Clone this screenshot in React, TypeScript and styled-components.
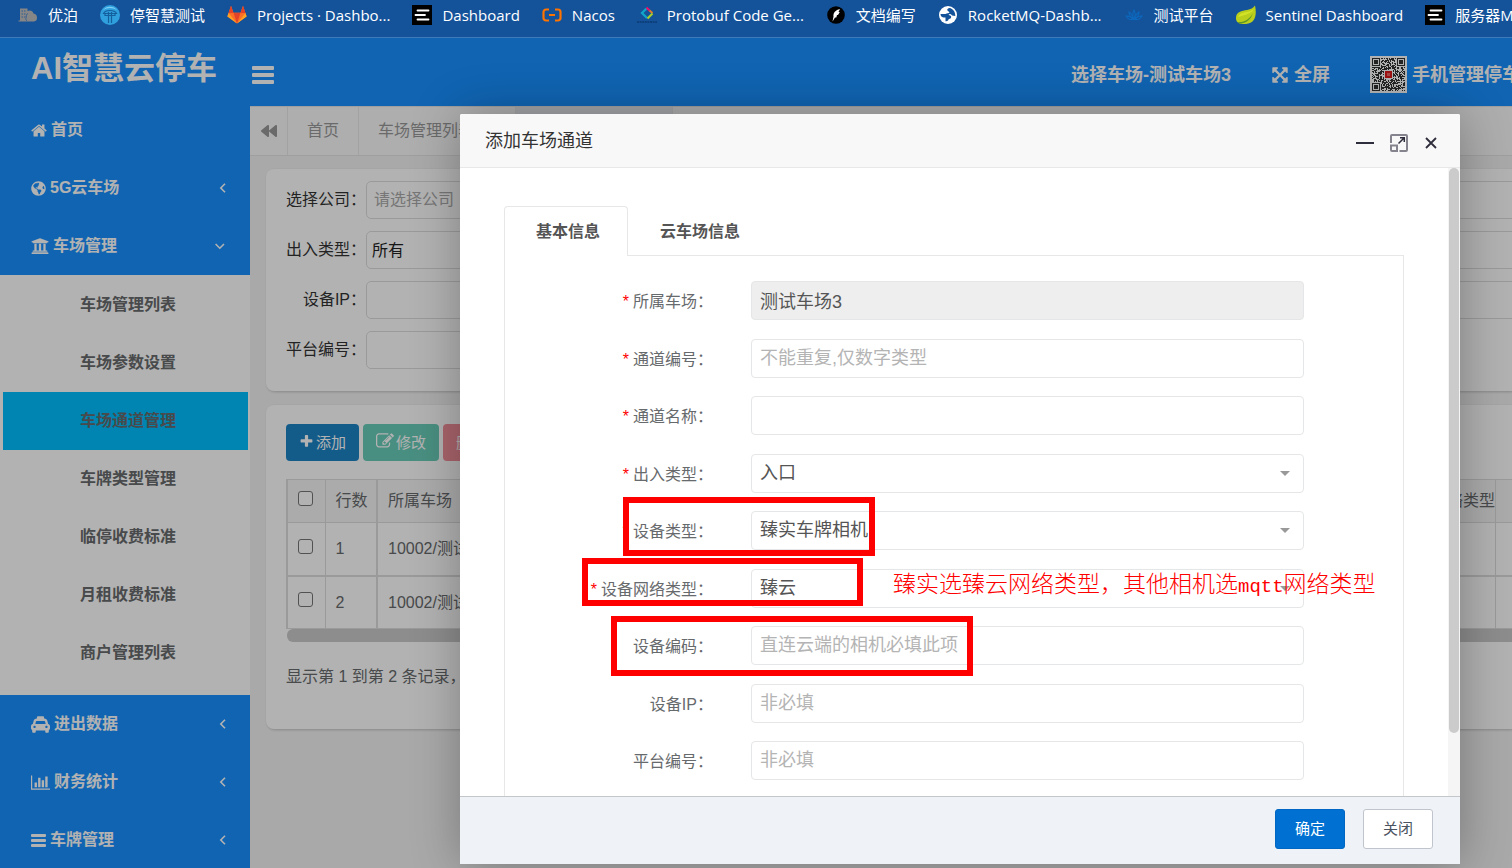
import React from "react";
import styled, { createGlobalStyle, css } from "styled-components";
import { FaUniversity, FaTaxi, FaBackward, FaGlobeAmericas } from "react-icons/fa";

const sans = `"Liberation Sans", "Noto Sans CJK SC", sans-serif`;

const GlobalStyle = createGlobalStyle`
  *, *::before, *::after { box-sizing: border-box; }
  body { margin: 0; font-family: ${sans}; font-size: 16px; color: #676a6c; }
  button, input, select { font-family: inherit; }
  a { color: inherit; text-decoration: none; }
  ul { list-style: none; margin: 0; padding: 0; }
`;

/* ---------- browser bookmarks ---------- */

const Screen = styled.div`
  display: flex;
  flex-direction: column;
  height: 100vh;
  overflow: hidden;
`;

const Bookmarks = styled.nav`
  flex: none;
  display: flex;
  align-items: center;
  gap: 22px;
  height: 38px;
  padding: 0 0 8px 18px;
  overflow: hidden;
  background: #14529a;
  border-bottom: 1px solid #3f7bbb;
`;

const Bookmark = styled.a`
  flex: none;
  display: flex;
  align-items: center;
  gap: 10px;
  color: #fff;
  font: 15px/24px "Open Sans", "Noto Sans CJK SC", sans-serif;
  white-space: nowrap;
  svg { flex: none; }
`;

/* ---------- page frame ---------- */

const Page = styled.div`
  position: relative;
  flex: 1;
  min-height: 0;
  display: flex;
  overflow: hidden;
`;

const Sidebar = styled.aside`
  flex: none;
  width: 250px;
  background: #1890ff;
  color: #fff;
`;

const Brand = styled.h1`
  height: 63px;
  margin: 0;
  padding-left: 31px;
  font-size: 31px;
  line-height: 62px;
  font-weight: 700;
`;

const MenuLink = styled.a`
  display: flex;
  align-items: center;
  gap: 4px;
  height: 58px;
  padding: 0 22px 0 31px;
  font-weight: 700;
  line-height: 24px;
  > svg:last-child:not(:first-child) { margin-left: auto; }
`;

const SubMenu = styled.ul`
  padding: 1px 2px 13px 3px;
  background: #fff;
  color: #676a6c;
`;

const SubLink = styled.a<{ $active?: boolean }>`
  display: block;
  height: 58px;
  padding-left: 77px;
  font-weight: 700;
  line-height: 58px;
  background: ${(p) => (p.$active ? "#00bfff" : "transparent")};
`;

const Main = styled.main`
  flex: 1;
  min-width: 0;
  background: #f3f3f4;
`;

const TopBar = styled.header`
  display: flex;
  align-items: center;
  height: 68px;
  padding: 5px 0 0 2px;
  background: #1890ff;
  color: #fff;
  overflow: hidden;
`;

const IconButton = styled.button`
  display: grid;
  place-items: center;
  padding: 0;
  border: 0;
  background: none;
  color: inherit;
`;

const TopLinks = styled.nav`
  flex: none;
  display: flex;
  align-items: center;
  gap: 40px;
  margin: 0 -8px 0 auto;
`;

const TopLink = styled.a`
  display: flex;
  align-items: center;
  gap: 5px;
  font-size: 18px;
  line-height: 26px;
  font-weight: 700;
  white-space: nowrap;
`;

const PageTabs = styled.nav`
  display: flex;
  height: 50px;
  border-top: 1px solid #e4e4e4;
  border-bottom: 1px solid #e4e4e4;
  background: #fafafa;
  color: #999;
  overflow: hidden;
`;

const PageTab = styled.a<{ $active?: boolean }>`
  flex: none;
  display: flex;
  align-items: center;
  min-width: ${(p) => (p.$active !== undefined ? "157px" : "0")};
  padding: 0 19px;
  border-right: 1px solid #e8e8e8;
  line-height: 24px;
  background: ${(p) => (p.$active ? "#eaedf1" : "transparent")};
`;

const TabScroller = styled(IconButton)`
  flex: none;
  width: 38px;
  border-right: 1px solid #e8e8e8;
`;

const Cards = styled.div`
  display: flex;
  flex-direction: column;
  gap: 14px;
  padding: 13px 0 0 16px;
`;

const Card = styled.section<{ $pad: string }>`
  padding: ${(p) => p.$pad};
  border-radius: 8px 0 0 8px;
  background: #fff;
  box-shadow: 1px 1px 3px rgba(0, 0, 0, 0.2);
  overflow: hidden;
`;

const FilterForm = styled.form`
  display: grid;
  row-gap: 12px;
`;

const FilterRow = styled.div`
  display: grid;
  grid-template-columns: 80px 1fr;
  align-items: center;
  label {
    color: #333;
    line-height: 36px;
    text-align: right;
    white-space: nowrap;
  }
`;

const filterControl = css<{ $short?: boolean }>`
  appearance: none;
  width: ${(p) => (p.$short ? "250px" : "calc(100% + 8px)")};
  height: 38px;
  border: 1px solid #ddd;
  border-radius: 5px;
  background: #fff;
  color: #222;
  font-size: 16px;
`;

const FilterInput = styled.input<{ $short?: boolean }>`
  ${filterControl}
  padding: 0 7px;
  &::placeholder { color: #aaa; opacity: 1; }
`;

const FilterSelect = styled.select<{ $short?: boolean }>`
  ${filterControl}
  padding: 0 5px;
`;

const Actions = styled.div`
  display: flex;
  gap: 4px;
  margin-bottom: 18px;
`;

const ActionButton = styled.button<{ $color: string }>`
  display: flex;
  align-items: center;
  gap: 2px;
  height: 37px;
  padding: 0 13px 3px;
  border: 0;
  border-radius: 4px;
  background: ${(p) => p.$color};
  color: #fff;
  font-size: 15px;
  &:disabled { opacity: 0.65; }
`;

const DataTable = styled.table`
  width: calc(100% + 4px);
  table-layout: fixed;
  border-collapse: collapse;
  border-left: 2px solid #ddd;
  line-height: 24px;
  th, td {
    padding: 0 10px;
    border: 1px solid #ddd;
    font-weight: 400;
    text-align: left;
    white-space: nowrap;
    overflow: hidden;
  }
  th { height: 43px; background: #f5f5f6; }
  td { height: 53px; padding-top: 1px; }
  tbody tr + tr td { border-top-width: 2px; }
  th:first-child, td:first-child { border-left-width: 2px; }
  th:nth-child(3), td:nth-child(3) { border-left-width: 2px; }
  th:nth-child(4) { padding-right: 0; text-align: right; }
`;

const Tick = styled.input`
  appearance: none;
  display: block;
  width: 15px;
  height: 15px;
  margin: 0 0 6px;
  border: 1px solid #767676;
  border-radius: 3px;
  background: #fff;
`;

const TableScroll = styled.div`
  height: 13px;
  margin-left: 1px;
  border-radius: 6px 0 0 6px;
  background: #cacaca;
`;

const Summary = styled.p`
  margin: 23px 0 0;
  line-height: 24px;
  white-space: nowrap;
`;

/* ---------- dialog ---------- */

const Shade = styled.div`
  position: absolute;
  inset: 0;
  background: rgba(0, 0, 0, 0.3);
`;

const Dialog = styled.section`
  position: absolute;
  top: 76px;
  right: 52px;
  bottom: 4px;
  left: 460px;
  display: flex;
  flex-direction: column;
  border-radius: 2px;
  background: #fff;
  box-shadow: 1px 1px 50px rgba(0, 0, 0, 0.3);
`;

const DialogHead = styled.header`
  flex: none;
  display: flex;
  align-items: center;
  height: 54px;
  padding: 0 22px 0 25px;
  border-bottom: 1px solid #e8e8e8;
  border-radius: 2px 2px 0 0;
  background: #f8f8f8;
  color: #2e2d3c;
`;

const DialogTitle = styled.h2`
  margin: 0 auto 0 0;
  color: #333;
  font-size: 18px;
  line-height: 52px;
  font-weight: 400;
`;

const WindowButtons = styled.div`
  display: flex;
  align-items: center;
  gap: 16px;
  padding-top: 4px;
`;

const DialogBody = styled.div`
  flex: 1;
  min-height: 0;
  display: flex;
`;

const ScrollArea = styled.div`
  flex: 1;
  padding: 38px 44px 0;
  overflow-y: auto;
  scrollbar-width: none;
`;

const ScrollTrack = styled.div`
  flex: none;
  width: 12px;
  padding: 0 1px;
  background: #f5f5f5;
`;

const ScrollThumb = styled.div`
  height: 90%;
  border-radius: 5px;
  background: #cbcbcb;
`;

const FormTabs = styled.div`
  display: flex;
  height: 49px;
`;

const FormTab = styled.button<{ $active?: boolean }>`
  height: 50px;
  padding: 0 27px 4px 31px;
  border: 1px solid ${(p) => (p.$active ? "#e7e7e7" : "transparent")};
  border-bottom: 0;
  border-radius: 4px 4px 0 0;
  background: ${(p) => (p.$active ? "#fff" : "transparent")};
  color: #555;
  font-size: 16px;
  font-weight: 700;
  z-index: 1;
`;

const FormPanel = styled.form`
  padding: 25px 99px 84px 0;
  border: 1px solid #e7e7e7;
`;

const FieldRow = styled.div`
  display: grid;
  grid-template-columns: 208px 1fr;
  column-gap: 38px;
  align-items: center;
  margin-bottom: 19px;
  &:nth-child(even) { margin-bottom: 18px; }
`;

const FieldLabel = styled.label<{ $required?: boolean }>`
  padding-top: 2px;
  line-height: 37px;
  text-align: right;
  white-space: nowrap;
  ${(p) =>
    p.$required &&
    css`
      &::before { content: "*"; margin-right: 4px; color: #f00; }
    `}
`;

const control = css`
  appearance: none;
  width: 100%;
  height: 39px;
  padding: 0 8px 1px;
  border: 1px solid #e5e6e7;
  border-radius: 4px;
  background: #fff;
  color: #555;
  font-size: 18px;
`;

const TextField = styled.input`
  ${control}
  &::placeholder { color: #b4b4b4; opacity: 1; }
  &[readonly] { background: #eee; }
`;

const SelectField = styled.select`
  ${control}
`;

const SelectBox = styled.div`
  position: relative;
  &::after {
    content: "";
    position: absolute;
    top: 17px;
    right: 14px;
    border: 5px solid transparent;
    border-top-color: #999;
    border-bottom: 0;
  }
`;

const DialogFoot = styled.footer`
  flex: none;
  display: flex;
  justify-content: flex-end;
  gap: 18px;
  height: 68px;
  padding: 12px 27px 0 0;
  border-top: 1px solid #c4c7ca;
  background: #eff3f7;
`;

const FootButton = styled.button<{ $primary?: boolean }>`
  width: 70px;
  height: 40px;
  padding: 0 0 3px;
  border: 1px solid ${(p) => (p.$primary ? "#0067c2" : "#c0c4cc")};
  border-radius: 3px;
  background: ${(p) => (p.$primary ? "#0070d2" : "#fff")};
  color: ${(p) => (p.$primary ? "#fff" : "#4b5360")};
  font-size: 15px;
`;

/* Red guidance marks that lie over the dialog */

const Mark = styled.div<{ $x: number; $y: number; $w: number; $h: number }>`
  position: absolute;
  left: ${(p) => p.$x}px;
  top: ${(p) => p.$y}px;
  width: ${(p) => p.$w}px;
  height: ${(p) => p.$h}px;
  border: 6px solid #f00;
  pointer-events: none;
`;

const Note = styled.p`
  position: absolute;
  left: 433px;
  top: 455px;
  margin: 0;
  color: #f00;
  font: 23px/32px "Liberation Serif", "Noto Sans CJK SC", serif;
  font-weight: 300;
  white-space: nowrap;
  pointer-events: none;
  code { font: 19px/32px "Liberation Mono", monospace; }
`;

/* ---------- icons ---------- */

const Glyph = ({ d, w = 1792, size = 17 }: { d: string; w?: number; size?: number }) => (
  <svg height={size} width={Math.round((size * w) / 1792)} viewBox={`0 0 ${w} 1792`} fill="currentColor" aria-hidden="true">
    <path d={d} />
  </svg>
);

const homePath =
  "M1408 992v480q0 26-19 45t-45 19h-384v-384h-256v384h-384q-26 0-45-19t-19-45v-480q0-1 .5-3t.5-3l575-474 575 474q1 2 1 6zm223-69l-62 74q-8 9-21 11h-3q-13 0-21-7l-692-577-692 577q-12 8-24 7-13-2-21-11l-62-74q-8-10-7-23.5t11-21.5l719-599q32-26 76-26t76 26l244 204v-195q0-14 9-23t23-9h192q14 0 23 9t9 23v408l219 182q10 8 11 21.5t-7 23.5z";
const chartPath =
  "M640 896v512h-256v-512h256zm384-512v1024h-256v-1024h256zm1024 1152v128h-2048v-1536h128v1408h1920zm-640-896v768h-256v-768h256zm384-384v1152h-256v-1152h256z";
const plusPath =
  "M1600 736v192q0 40-28 68t-68 28h-416v416q0 40-28 68t-68 28h-192q-40 0-68-28t-28-68v-416h-416q-40 0-68-28t-28-68v-192q0-40 28-68t68-28h416v-416q0-40 28-68t68-28h192q40 0 68 28t28 68v416h416q40 0 68 28t28 68z";
const editPath =
  "M888 1184l116-116-152-152-116 116v56h96v96h56zm440-720q-16-16-33 1l-350 350q-17 17-1 33t33-1l350-350q17-17 1-33zm80 594v190q0 119-84.5 203.5t-203.5 84.5h-832q-119 0-203.5-84.5t-84.5-203.5v-832q0-119 84.5-203.5t203.5-84.5h832q63 0 117 25 15 7 18 23 3 17-9 29l-49 49q-14 14-32 8-23-6-45-6h-832q-66 0-113 47t-47 113v832q0 66 47 113t113 47h832q66 0 113-47t47-113v-126q0-13 9-22l64-64q15-15 35-7t20 29zm-96-738l288 288-672 672h-288v-288zm444 132l-92 92-288-288 92-92q28-28 68-28t68 28l152 152q28 28 28 68t-28 68z";
const expandPath =
  "M1411 541l-355 355 355 355 144-144q29-31 70-14 39 17 39 59v448q0 26-19 45t-45 19h-448q-42 0-59-40-17-39 14-69l144-144-355-355-355 355 144 144q31 30 14 69-17 40-59 40h-448q-26 0-45-19t-19-45v-448q0-42 40-59 39-17 69 14l144 144 355-355-355-355-144 144q-19 19-45 19-12 0-24-5-40-17-40-59v-448q0-26 19-45t45-19h448q42 0 59 40 17 39-14 69l-144 144 355 355 355-355-144-144q-31-30-14-69 17-40 59-40h448q26 0 45 19t19 45v448q0 42-39 59-13 5-25 5-26 0-45-19z";

const Bars = ({ w, h, t }: { w: number; h: number; t: number }) => (
  <svg width={w} height={h} fill="currentColor" aria-hidden="true">
    {[0, (h - t) / 2, h - t].map((y) => (
      <rect key={y} y={y} width={w} height={t} rx="1" />
    ))}
  </svg>
);

const Chevron = ({ down }: { down?: boolean }) => (
  <svg width={down ? 14 : 10} height="12" viewBox={down ? "0 0 14 12" : "0 0 10 12"} fill="none" stroke="currentColor" strokeWidth="1.6" aria-hidden="true">
    <path d={down ? "M1.6 4l4.2 4.2L10 4" : "M7 1.8L2.8 6 7 10.2"} />
  </svg>
);

const Qr = () => {
  const n = 33;
  const cells: string[] = [];
  let seed = 11;
  for (let y = 0; y < n; y++)
    for (let x = 0; x < n; x++) {
      seed = (seed * 1103515245 + 12345) % 2147483648;
      const finder = (x < 9 && y < 9) || (x > n - 10 && y < 9) || (x < 9 && y > n - 10);
      if (!finder && seed / 2147483648 > 0.47) cells.push(`M${x} ${y}h1v1h-1z`);
    }
  const eye = (x: number, y: number) =>
    `M${x} ${y}h8v8h-8zM${x + 1} ${y + 1}v6h6v-6zM${x + 2} ${y + 2}h4v4h-4z`;
  return (
    <svg width="37" height="37" viewBox="-2 -2 37 37" aria-hidden="true">
      <rect x="-2" y="-2" width="37" height="37" fill="#fff" />
      <path d={cells.join("")} fill="#333" />
      <path d={eye(0, 0) + eye(n - 8, 0) + eye(0, n - 8)} fill="#333" fillRule="evenodd" />
      <rect x="12" y="12" width="9" height="9" fill="#fff" />
      <rect x="13" y="13" width="7" height="7" fill="#e01818" />
      <rect x="15" y="15" width="3" height="3" fill="#e66" />
    </svg>
  );
};

const Svg20 = ({ children }: { children: React.ReactNode }) => (
  <svg width="20" height="20" viewBox="0 0 20 20" aria-hidden="true">{children}</svg>
);

const CityIcon = () => (
  <Svg20>
    <path d="M2 3.500h7.500V6a4 4 0 0 1 6 2.500A4.200 4.200 0 0 1 19 12.500a3.800 3.800 0 0 1-3 4H.5v-1H2z" fill="#868686" />
    <path d="M3.500 6h5M3.500 9h4M3.500 12h5" stroke="#2f5c94" strokeWidth="1.200" strokeDasharray="1.500 1" />
    <path d="M10 8.500c-1.500.5-2 2-1.500 3.500-1 1-1 3 .5 4" fill="none" stroke="#2f5c94" strokeWidth=".8" />
  </Svg20>
);
const ParkIcon = () => (
  <Svg20>
    <circle cx="10" cy="10" r="10" fill="#2fa0dd" />
    <path d="M3 5a9 9 0 0 1 14 0 14 14 0 0 0-14 0" fill="#7fd0f5" />
    <path d="M3.500 8.500c2-4 11-4 13 0zM5 8.500v2h10v-2M8.500 7v11M11.500 7v11" fill="none" stroke="#14609f" strokeWidth="1.200" />
  </Svg20>
);
const GitlabIcon = () => (
  <Svg20>
    <path d="M10 18.500L.4 11.500 4 .8l2.500 7h7l2.500-7 3.600 10.700z" fill="#fc6d26" />
    <path d="M4 .8L1.500 8h5zM16 .8L18.500 8h-5zM6.500 7.800h7L10 18.500z" fill="#e24329" />
    <path d="M1.500 8L.4 11.500 10 18.500zM18.500 8l1.100 3.500L10 18.500z" fill="#fca326" />
  </Svg20>
);
const StackIcon = () => (
  <Svg20>
    <path d="M0 0h20v20H0z" />
    <path d="M5.500 5.500h11M3.500 10h9.500M5.500 14.500h11" stroke="#fff" strokeWidth="1.800" strokeLinecap="round" />
  </Svg20>
);
const NacosIcon = () => (
  <Svg20>
    <path d="M7 4.500H4a2.500 2.500 0 0 0-2.500 2.500v6A2.500 2.500 0 0 0 4 15.500h3M13 4.500h3a2.500 2.500 0 0 1 2.500 2.500v6a2.500 2.500 0 0 1-2.500 2.500h-3M7 10h6" fill="none" stroke="#ff7300" strokeWidth="2.200" />
  </Svg20>
);
const ProtoIcon = () => (
  <Svg20>
    <g fill="none" strokeWidth="2.200">
      <path d="M9.500 3.500L5 8l5 5" stroke="#11a7c9" />
      <path d="M9.500 2.500l3 3" stroke="#e8116c" />
      <path d="M12.500 5.500L15.500 8" stroke="#e07a2c" />
      <path d="M15.500 8.500L10.500 13.500" stroke="#a8cf2c" />
    </g>
    <path d="M0 17h20" stroke="#0b3a72" strokeWidth="1.500" strokeDasharray="2 .6" />
  </Svg20>
);
const FeatherIcon = () => (
  <Svg20>
    <circle cx="10" cy="10" r="8.800" />
    <path d="M14 4l-1.500 3h1.300l-1.800 3h-1l-.7 2.500H9L6.500 16.500l1-5C7 8 9.500 5 14 4z" fill="#fff" />
  </Svg20>
);
const GlobeIcon = () => (
  <Svg20>
    <circle cx="10" cy="10" r="9" fill="#fff" />
    <path d="M11.500 3c-2.500.5-3 2.300-1.500 3l1.500 1.200c-.5 1.300-2.500.8-4 1.800L2.500 9c0 3 2.500 3.500 5 3.500v3.700c2 .3 3-.7 3.200-2.200 2.300 0 2.800-1.500 2.300-3l-2.500-1.200c1-1.300 2.500-.8 3.500.7l3.300.5C17.500 7 15 3.500 11.500 3z" fill="#14529a" />
  </Svg20>
);
const LotusIcon = () => (
  <Svg20>
    <g fill="none" stroke="#0d68bd" strokeWidth="1.100">
      <path d="M10 14c-1.500-3-1.500-6 0-9 1.500 3 1.500 6 0 9zM9 14C6.500 12 5 10 5 7c2.500 1.500 4 4 4 7zM11 14c2.500-2 4-4 4-7-2.500 1.500-4 4-4 7zM9 14.500c-3 .5-5.500-1-7-3.500 3-.3 5 1 7 3.500zM11 14.500c3 .5 5.500-1 7-3.500-3-.3-5 1-7 3.500z" />
    </g>
  </Svg20>
);
const LeafIcon = () => (
  <Svg20>
    <path d="M19 .5c2 9 .5 18-9 18.500-5 .3-9.500-.5-10-5C-.5 7 5 6 11 5c4-.7 6-2 8-4.500z" fill="#b9cf1c" />
    <path d="M2 17c6 .5 12-3 15-9-2 7-8 11-14 10.500z" fill="#5f962a" />
    <path d="M2 12c1-3 5-4.500 9-5 3-.4 5-1.500 6.500-3C17 8 9 10 2 12z" fill="#d3e227" />
  </Svg20>
);

/* ---------- data ---------- */

const bookmarks: [string, React.FC][] = [
  ["优泊", CityIcon],
  ["停智慧测试", ParkIcon],
  ["Projects · Dashbo...", GitlabIcon],
  ["Dashboard", StackIcon],
  ["Nacos", NacosIcon],
  ["Protobuf Code Ge...", ProtoIcon],
  ["文档编写", FeatherIcon],
  ["RocketMQ-Dashb...", GlobeIcon],
  ["测试平台", LotusIcon],
  ["Sentinel Dashboard", LeafIcon],
  ["服务器M", StackIcon],
];

const subItems = ["车场管理列表", "车场参数设置", "车场通道管理", "车牌类型管理", "临停收费标准", "月租收费标准", "商户管理列表"];

type Field = { id: string; label: string; required?: boolean; options?: string[]; value?: string; hint?: string };
const fields: Field[] = [
  { id: "park", label: "所属车场", required: true, value: "测试车场3" },
  { id: "channelNo", label: "通道编号", required: true, hint: "不能重复,仅数字类型" },
  { id: "channelName", label: "通道名称", required: true },
  { id: "direction", label: "出入类型", required: true, options: ["入口"] },
  { id: "deviceType", label: "设备类型", required: true, options: ["臻实车牌相机"] },
  { id: "networkType", label: "设备网络类型", required: true, options: ["臻云"] },
  { id: "deviceCode", label: "设备编码", hint: "直连云端的相机必填此项" },
  { id: "deviceIp", label: "设备IP", hint: "非必填" },
  { id: "platformNo", label: "平台编号", hint: "非必填" },
];

export default function App() {
  return (
    <Screen>
      <GlobalStyle />
      <Bookmarks>
        {bookmarks.map(([name, Icon], i) => (
          <Bookmark href="#" key={i}>
            <Icon />
            {name}
          </Bookmark>
        ))}
      </Bookmarks>

      <Page>
        <Sidebar>
          <Brand>AI智慧云停车</Brand>
          <MenuLink href="#"><Glyph d={homePath} w={1664} />首页</MenuLink>
          <MenuLink href="#"><FaGlobeAmericas size={15} />5G云车场<Chevron /></MenuLink>
          <MenuLink href="#"><FaUniversity size={18} />车场管理<Chevron down /></MenuLink>
          <SubMenu>
            {subItems.map((s) => (
              <li key={s}>
                <SubLink href="#" $active={s === "车场通道管理"}>{s}</SubLink>
              </li>
            ))}
          </SubMenu>
          <MenuLink href="#"><FaTaxi size={19} />进出数据<Chevron /></MenuLink>
          <MenuLink href="#"><Glyph d={chartPath} w={2048} />财务统计<Chevron /></MenuLink>
          <MenuLink href="#"><Bars w={15} h={13} t={3} />车牌管理<Chevron /></MenuLink>
        </Sidebar>

        <Main>
          <TopBar>
            <IconButton aria-label="菜单"><Bars w={22} h={18} t={4} /></IconButton>
            <TopLinks>
              <TopLink href="#">选择车场-测试车场3</TopLink>
              <TopLink href="#"><Glyph d={expandPath} size={18} />全屏</TopLink>
              <TopLink href="#"><Qr />手机管理停车</TopLink>
            </TopLinks>
          </TopBar>

          <PageTabs>
            <TabScroller aria-label="向左"><FaBackward size={16} /></TabScroller>
            <PageTab href="#">首页</PageTab>
            <PageTab href="#" $active={false}>车场管理列表</PageTab>
            <PageTab href="#" $active aria-label="车场通道管理" />
          </PageTabs>

          <Cards>
            <Card $pad="12px 0 22px 20px">
              <FilterForm>
                <FilterRow>
                  <label htmlFor="f-company">选择公司：</label>
                  <FilterInput id="f-company" placeholder="请选择公司" />
                </FilterRow>
                <FilterRow>
                  <label htmlFor="f-direction">出入类型：</label>
                  <FilterSelect id="f-direction"><option>所有</option></FilterSelect>
                </FilterRow>
                <FilterRow>
                  <label htmlFor="f-ip">设备IP：</label>
                  <FilterInput id="f-ip" />
                </FilterRow>
                <FilterRow>
                  <label htmlFor="f-platform">平台编号：</label>
                  <FilterInput id="f-platform" $short />
                </FilterRow>
              </FilterForm>
            </Card>

            <Card $pad="19px 0 40px 20px">
              <Actions>
                <ActionButton $color="#1c84c6"><Glyph d={plusPath} size={15} />添加</ActionButton>
                <ActionButton $color="#1ab394" disabled><Glyph d={editPath} size={18} />修改</ActionButton>
                <ActionButton $color="#ed5565" disabled>删除</ActionButton>
              </Actions>
              <DataTable>
                <colgroup>
                  <col style={{ width: 38 }} />
                  <col style={{ width: 52 }} />
                  <col />
                  <col style={{ width: 120 }} />
                  <col style={{ width: 20 }} />
                </colgroup>
                <thead>
                  <tr>
                    <th><Tick type="checkbox" aria-label="全选" /></th>
                    <th>行数</th>
                    <th>所属车场</th>
                    <th>网络类型</th>
                    <th />
                  </tr>
                </thead>
                <tbody>
                  {[1, 2].map((n) => (
                    <tr key={n}>
                      <td><Tick type="checkbox" aria-label={`第${n}行`} /></td>
                      <td>{n}</td>
                      <td>10002/测试车场3</td>
                      <td />
                      <td />
                    </tr>
                  ))}
                </tbody>
              </DataTable>
              <TableScroll />
              <Summary>显示第 1 到第 2 条记录，总共 2 条记录</Summary>
            </Card>
          </Cards>
        </Main>

        <Shade />

        <Dialog role="dialog" aria-labelledby="dialog-title">
          <DialogHead>
            <DialogTitle id="dialog-title">添加车场通道</DialogTitle>
            <WindowButtons>
              <IconButton aria-label="最小化">
                <svg width="18" height="18"><path d="M0 9h18" stroke="currentColor" strokeWidth="2" /></svg>
              </IconButton>
              <IconButton aria-label="最大化">
                <svg width="18" height="18" viewBox="0 0 18 18" fill="none">
                  <path d="M1 9V2a1 1 0 0 1 1-1h14a1 1 0 0 1 1 1v14a1 1 0 0 1-1 1H9.500M1 11.500h6V17H2a1 1 0 0 1-1-1z" stroke="#85848e" strokeWidth="2" />
                  <path d="M8.500 9.500L14 4M10 3.800h4.300V8" stroke="#2e2d3c" strokeWidth="1.500" />
                </svg>
              </IconButton>
              <IconButton aria-label="关闭窗口">
                <svg width="14" height="14" viewBox="0 0 14 14"><path d="M2 2l10 10M12 2L2 12" stroke="currentColor" strokeWidth="1.800" /></svg>
              </IconButton>
            </WindowButtons>
          </DialogHead>

          <DialogBody>
            <ScrollArea>
              <FormTabs>
                <FormTab $active>基本信息</FormTab>
                <FormTab>云车场信息</FormTab>
              </FormTabs>
              <FormPanel>
                {fields.map((f) => (
                  <FieldRow key={f.id}>
                    <FieldLabel htmlFor={f.id} $required={f.required}>{f.label}：</FieldLabel>
                    {f.options ? (
                      <SelectBox>
                        <SelectField id={f.id}>
                          {f.options.map((o) => <option key={o}>{o}</option>)}
                        </SelectField>
                      </SelectBox>
                    ) : (
                      <TextField id={f.id} defaultValue={f.value} readOnly={!!f.value} placeholder={f.hint} />
                    )}
                  </FieldRow>
                ))}
              </FormPanel>
            </ScrollArea>
            <ScrollTrack><ScrollThumb /></ScrollTrack>
          </DialogBody>

          <DialogFoot>
            <FootButton $primary>确定</FootButton>
            <FootButton>关闭</FootButton>
          </DialogFoot>

          <Mark $x={163} $y={383} $w={252} $h={59} />
          <Mark $x={122} $y={444} $w={281} $h={48} />
          <Mark $x={151} $y={502} $w={362} $h={60} />
          <Note>臻实选臻云网络类型，其他相机选<code>mqtt</code>网络类型</Note>
        </Dialog>
      </Page>
    </Screen>
  );
}
